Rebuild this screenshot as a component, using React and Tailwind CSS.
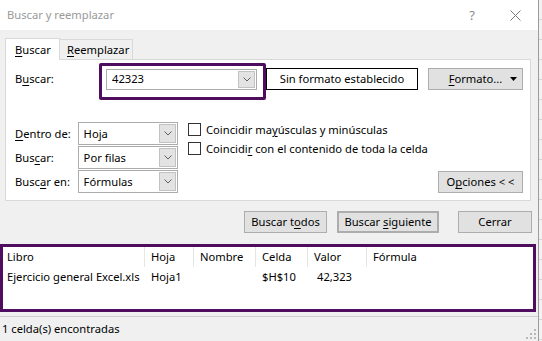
import clsx from 'clsx';

const U = ({ children }) => <span className="underline decoration-1 underline-offset-[2px]">{children}</span>;

function Chevron() {
  return (
    <svg width="8" height="5" viewBox="0 0 8 5">
      <polyline points="0.5,0.5 4,4 7.5,0.5" fill="none" stroke="#5f5f5f" strokeWidth="1" />
    </svg>
  );
}

function Select({ value, className }) {
  return (
    <div className={clsx('flex items-stretch border border-[#acacac] bg-white', className)}>
      <span className="flex flex-1 items-center pl-[5px]">{value}</span>
      <span className="m-px flex w-[17px] items-center justify-center border border-[#c2c2c2] bg-[#e3e3e3]">
        <Chevron />
      </span>
    </div>
  );
}

function Button({ children, className }) {
  return (
    <div className={clsx('flex h-[22px] items-center justify-center border border-[#adadad] bg-[#e1e1e1]', className)}>
      {children}
    </div>
  );
}

function Check({ children }) {
  return (
    <div className="flex h-[19px] items-center">
      <span className="mr-[5px] h-[13px] w-[13px] border border-[#333] bg-white" />
      <span>{children}</span>
    </div>
  );
}

const TitleBar = () => (
  <div className="flex h-[30px] items-center bg-white pl-[7px]">
    <span className="text-[#999]">Buscar y reemplazar</span>
    <span className="ml-auto mr-[35px] text-[13px] text-[#8a8a8a]">?</span>
    <svg width="11" height="11" viewBox="0 0 11 11" className="mr-[17px]">
      <path d="M0.5 0.5 L10.5 10.5 M10.5 0.5 L0.5 10.5" stroke="#7a7a7a" strokeWidth="1" />
    </svg>
  </div>
);

const columns = ['Libro', 'Hoja', 'Nombre', 'Celda', 'Valor', 'Fórmula'];

function Results() {
  return (
    <div className="mt-[11px] h-[68px] w-[536px] border-[3px] border-[#4f0d60] bg-white">
      <div className="grid grid-cols-[142px_49px_62px_52px_59px_1fr]">
        {columns.map((c, i) => (
          <div
            key={c}
            className={clsx('flex h-[20px] items-center border-[#e5e5e5]', i === 0 ? 'pl-[4px]' : 'pl-[6px]', i < 5 && 'border-r')}
          >
            {c}
          </div>
        ))}
        <div className="flex h-[20px] items-center pl-[4px]">Ejercicio general Excel.xls</div>
        <div className="flex h-[20px] items-center pl-[6px]">Hoja1</div>
        <div />
        <div className="flex h-[20px] items-center pl-[6px]">$H$10</div>
        <div className="flex h-[20px] items-center pl-[9px]">42,323</div>
        <div />
      </div>
    </div>
  );
}

function ExcelEdge() {
  return (
    <div className="flex flex-1 flex-col bg-[#f2f2f2]">
      {Array.from({ length: 18 }).map((_, i) => (
        <div key={i} className="h-[20px] shrink-0 border-b border-[#d4d4d4]" />
      ))}
    </div>
  );
}

export default function App() {
  return (
    <div className="flex h-[341px] w-[542px] overflow-hidden bg-white font-['Noto_Sans',sans-serif] text-[11.2px] leading-none text-black">
      <div className="flex w-[539px] shrink-0 flex-col border-r border-[#9c9c9c]">
        <TitleBar />
        <div className="flex flex-1 flex-col bg-[#f0f0f0]">
          {/* tabs */}
          <div className="flex items-end pl-[5px] pt-[8px]">
            <div className="relative z-10 -mb-px flex h-[22px] w-[55px] items-center border border-b-0 border-[#d9d9d9] bg-white pl-[9px]">
              <span><U>B</U>uscar</span>
            </div>
            <div className="flex h-[20px] w-[73px] items-center border border-b-0 border-l-0 border-[#d9d9d9] pl-[7px]">
              <span><U>R</U>eemplazar</span>
            </div>
          </div>

          {/* panel */}
          <div className="ml-[5px] flex h-[142px] w-[526px] flex-col border border-[#d9d9d9] bg-white">
            <div className="flex items-center pt-[8px]">
              <span className="w-[100px] pl-[9px]">B<U>u</U>scar:</span>
              <div className="relative">
                <Select value="42323" className="h-[21px] w-[151px]" />
                <div className="absolute -bottom-[10px] -left-[7px] -right-[9px] -top-[6px] rounded-[2px] border-[3px] border-[#4f0d60]" />
              </div>
              <div className="ml-[9px] flex h-[22px] w-[152px] items-center justify-center border border-black bg-white">
                Sin formato establecido
              </div>
              <Button className="relative ml-[10px] h-[21px] w-[95px]">
                <span><U>F</U>ormato...</span>
                <svg width="7" height="4" viewBox="0 0 7 4" className="absolute right-[5px] top-[8px]">
                  <path d="M0 0 H7 L3.5 4 Z" fill="#000" />
                </svg>
              </Button>
            </div>

            <div className="mt-[32px] flex">
              <div className="flex w-[172px] flex-col gap-[1px]">
                <div className="flex items-center">
                  <span className="w-[72px] pl-[9px]"><U>D</U>entro de:</span>
                  <Select value="Hoja" className="h-[23px] w-[101px]" />
                </div>
                <div className="flex items-center">
                  <span className="w-[72px] pl-[9px]">Bus<U>c</U>ar:</span>
                  <Select value="Por filas" className="h-[23px] w-[101px]" />
                </div>
                <div className="flex items-center">
                  <span className="w-[72px] pl-[9px]">Busc<U>a</U>r en:</span>
                  <Select value="Fórmulas" className="h-[23px] w-[101px]" />
                </div>
              </div>
              <div className="-mt-[2px] ml-[10px] flex flex-1 flex-col">
                <Check>Coincidir ma<U>y</U>úsculas y minúsculas</Check>
                <Check>Coincidi<U>r</U> con el contenido de toda la celda</Check>
                <Button className="mr-[7px] mt-[13px] w-[85px] self-end">
                  <span>O<U>p</U>ciones &lt; &lt;</span>
                </Button>
              </div>
            </div>
          </div>

          {/* actions */}
          <div className="mt-[10px] flex justify-end pr-[6px]">
            <Button className="w-[83px]"><span>Buscar t<U>o</U>dos</span></Button>
            <Button className="ml-[10px] w-[102px] border-2 border-[#0078d7]"><span>Buscar <U>s</U>iguiente</span></Button>
            <Button className="ml-[19px] w-[74px]">Cerrar</Button>
          </div>

          <Results />

          {/* status */}
          <div className="relative mt-[4px] flex flex-1 items-center border-t border-[#cfcfcf] pl-[2px]">
            1 celda(s) encontradas
            <svg width="10" height="10" viewBox="0 0 10 10" className="absolute bottom-[2px] right-[2px]">
              {[[8, 0], [8, 4], [4, 4], [8, 8], [4, 8], [0, 8]].map(([x, y]) => (
                <rect key={`${x}-${y}`} x={x} y={y} width="2" height="2" fill="#b8b8b8" />
              ))}
            </svg>
          </div>
        </div>
      </div>
      <ExcelEdge />
    </div>
  );
}
